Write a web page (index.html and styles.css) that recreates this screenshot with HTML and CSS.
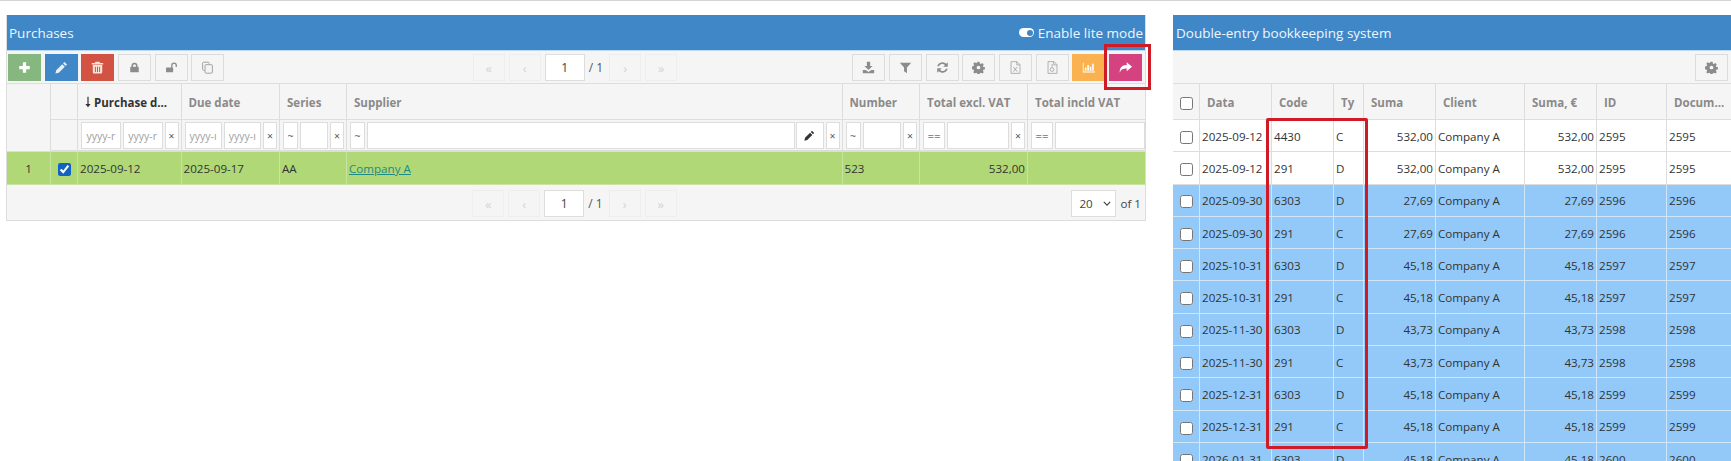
FILE: index.html
```html
<!DOCTYPE html>
<html lang="en">
<head>
<meta charset="utf-8">
<title>Purchases</title>
<link rel="stylesheet" href="styles.css">
</head>
<body>
<svg class="defs" width="0" height="0" aria-hidden="true">
  <symbol id="i-plus" viewBox="0 0 16 16"><path d="M6 1.5h4V6h4.5v4H10v4.5H6V10H1.5V6H6z"/></symbol>
  <symbol id="i-pencil" viewBox="0 0 16 16"><path d="M11.6 1.2l3.2 3.2-1.7 1.7-3.2-3.2zM8.9 3.9l3.2 3.2-7.4 7.4-4.2 1 1-4.2z"/></symbol>
  <symbol id="i-trash" viewBox="0 0 16 16"><path fill-rule="evenodd" d="M5.5 1h5l.8 1.6H15v1.7H1V2.6h3.7zM2.2 5h11.6v8.8c0 1-.8 1.7-1.7 1.7H3.9c-1 0-1.7-.8-1.7-1.7zM4.8 7v6.5h1.2V7zm2.6 0v6.5h1.2V7zM10 7v6.5h1.2V7z"/></symbol>
  <symbol id="i-lock" viewBox="0 0 16 16"><path fill-rule="evenodd" d="M8 1a4.4 4.4 0 0 1 4.4 4.4V7h.8c.6 0 1 .4 1 1v6c0 .6-.4 1-1 1H2.800c-.6 0-1-.4-1-1V8c0-.6.4-1 1-1h.8V5.400A4.400 4.400 0 0 1 8 1zm0 2.200a2.200 2.200 0 0 0-2.200 2.200V7h4.400V5.400A2.200 2.200 0 0 0 8 3.200z"/></symbol>
  <symbol id="i-unlock" viewBox="0 0 16 16"><path d="M1 8h8.500c.5 0 .9.400.9.900v5.200c0 .5-.4.900-.9.900H1c-.5 0-1-.4-1-.9V8.900C0 8.400.5 8 1 8zM7.500 8V5a4.200 4.200 0 0 1 8.400 0v2.400h-1.900V5a2.300 2.300 0 0 0-4.600 0v3z"/></symbol>
  <symbol id="i-copy" viewBox="0 0 16 16"><g fill="none" stroke="currentColor" stroke-width="1.200"><path d="M10 3.500V2.600c0-.6-.5-1.100-1.100-1.100H3.100C2.500 1.500 2 2 2 2.600v7.800c0 .6.500 1.100 1.100 1.100H4.500"/><rect x="5" y="4.500" width="9" height="10.500" rx="1.200"/></g></symbol>
  <symbol id="i-download" viewBox="0 0 16 16"><path d="M6 1h4v5h3l-5 5-5-5h3zM1 11h3.500L8 13.500 11.500 11H15v4H1z"/></symbol>
  <symbol id="i-filter" viewBox="0 0 16 16"><path d="M1 2h14L9.800 8v7L6.200 12.500V8z"/></symbol>
  <symbol id="i-refresh" viewBox="0 0 16 16"><path d="M14.500 1.500V7H9l2-2.100A4.500 4.500 0 0 0 3.700 6.500H1.600A6.600 6.600 0 0 1 12.600 3.400zM1.500 14.500V9H7l-2 2.100a4.500 4.500 0 0 0 7.300-1.600h2.100a6.600 6.600 0 0 1-11 3.100z"/></symbol>
  <symbol id="i-cog" viewBox="0 0 16 16"><path fill-rule="evenodd" d="M6.700 1h2.600l.4 2 1.300.6 1.700-1.100 1.800 1.800-1.100 1.700.6 1.300 2 .4v2.600l-2 .4-.6 1.300 1.100 1.700-1.800 1.800-1.700-1.100-1.300.6-.4 2H6.700l-.4-2-1.300-.6-1.700 1.100-1.800-1.800 1.100-1.700-.6-1.300-2-.4V6.700l2-.4.6-1.300-1.100-1.700 1.800-1.800 1.700 1.100 1.300-.6zM8 5.700a2.300 2.300 0 1 0 0 4.600 2.300 2.300 0 0 0 0-4.600z"/></symbol>
  <symbol id="i-fx" viewBox="0 0 16 16"><path fill="none" stroke="currentColor" d="M2.500.8h7.300l3.700 3.700v10.700h-11zM9.500 1v3.800h3.800"/><path fill="none" stroke="currentColor" stroke-width="1.100" d="M5.500 7.500l4.500 5.500M10 7.500L5.500 13"/></symbol>
  <symbol id="i-fp" viewBox="0 0 16 16"><path fill="none" stroke="currentColor" d="M2.500.8h7.300l3.700 3.700v10.700h-11zM9.500 1v3.800h3.800"/><path fill="none" stroke="currentColor" d="M7.500 3.500v4"/><circle cx="7.500" cy="10.500" r="2.300" fill="none" stroke="currentColor"/></symbol>
  <symbol id="i-chart" viewBox="0 0 16 16"><path d="M1 2h1v11h14v1H1zM3.500 8h2v4h-2zM6.500 5h2v7h-2zM9.500 7h2v5h-2zM12.500 3.500h2V12h-2z"/></symbol>
  <symbol id="i-share" viewBox="0 0 16 16"><path d="M9.500 1.500L16 7l-6.500 5.500V9.200C5 9.200 2.500 10 1 14.500.3 8.500 3.500 5 9.500 4.800z"/></symbol>
  <symbol id="i-sort" viewBox="0 0 8 14"><path d="M3.200 0h1.600v9.500H7.500L4 14 .5 9.500h2.700z"/></symbol>
</svg>

<div class="page">
  <section class="panel panel-main">
    <header class="panel-title">
      <span>Purchases</span>
      <span class="lite"><span class="toggle"></span>Enable lite mode</span>
    </header>
    <div class="toolbar">
      <div class="btns">
        <button class="btn btn-green"><svg class="ic"><use href="#i-plus"/></svg></button>
        <button class="btn btn-blue"><svg class="ic"><use href="#i-pencil"/></svg></button>
        <button class="btn btn-red"><svg class="ic"><use href="#i-trash"/></svg></button>
        <button class="btn"><svg class="ic ic-s"><use href="#i-lock"/></svg></button>
        <button class="btn"><svg class="ic ic-s"><use href="#i-unlock"/></svg></button>
        <button class="btn btn-light"><svg class="ic"><use href="#i-copy"/></svg></button>
      </div>
      <div class="pager">
        <span class="page-btn">«</span><span class="page-btn">‹</span>
        <span class="page-input">1</span><span class="page-total">/ 1</span>
        <span class="page-btn">›</span><span class="page-btn">»</span>
      </div>
      <div class="btns btns-right">
        <button class="btn"><svg class="ic"><use href="#i-download"/></svg></button>
        <button class="btn"><svg class="ic"><use href="#i-filter"/></svg></button>
        <button class="btn"><svg class="ic"><use href="#i-refresh"/></svg></button>
        <button class="btn"><svg class="ic"><use href="#i-cog"/></svg></button>
        <button class="btn btn-light"><svg class="ic"><use href="#i-fx"/></svg></button>
        <button class="btn btn-light"><svg class="ic"><use href="#i-fp"/></svg></button>
        <button class="btn btn-orange"><svg class="ic"><use href="#i-chart"/></svg></button>
        <button class="btn btn-pink"><svg class="ic"><use href="#i-share"/></svg></button>
      </div>
    </div>
    <table class="grid grid-main">
      <colgroup>
        <col class="m1"><col class="m2"><col class="m3"><col class="m4"><col class="m5"><col class="m6"><col class="m7"><col class="m8"><col class="m9">
      </colgroup>
      <thead>
        <tr class="head-row">
          <th rowspan="2"></th><th></th>
          <th class="active"><svg class="sort"><use href="#i-sort"/></svg>Purchase d...</th>
          <th>Due date</th><th>Series</th><th>Supplier</th><th>Number</th><th>Total excl. VAT</th><th>Total incld VAT</th>
        </tr>
        <tr class="filter-row">
          <td></td>
          <td><div class="filter"><span class="fi ph">yyyy-r</span><span class="fi ph">yyyy-r</span><span class="fx">×</span></div></td>
          <td><div class="filter"><span class="fi ph">yyyy-ı</span><span class="fi ph">yyyy-ı</span><span class="fx">×</span></div></td>
          <td><div class="filter"><span class="fo">~</span><span class="fi"></span><span class="fx">×</span></div></td>
          <td><div class="filter"><span class="fo">~</span><span class="fi"></span><span class="fe"><svg class="ic-p"><use href="#i-pencil"/></svg></span><span class="fx">×</span></div></td>
          <td><div class="filter"><span class="fo">~</span><span class="fi"></span><span class="fx">×</span></div></td>
          <td><div class="filter"><span class="fo fo-w">==</span><span class="fi"></span><span class="fx">×</span></div></td>
          <td><div class="filter filter-end"><span class="fo fo-w">==</span><span class="fi"></span></div></td>
        </tr>
      </thead>
      <tbody>
        <tr class="row-green">
          <td class="c">1</td><td class="c"><input type="checkbox" checked></td>
          <td>2025-09-12</td><td>2025-09-17</td><td>AA</td><td><a href="#">Company A</a></td><td>523</td><td class="r">532,00</td><td></td>
        </tr>
      </tbody>
    </table>
    <div class="toolbar footer">
      <div></div>
      <div class="pager">
        <span class="page-btn">«</span><span class="page-btn">‹</span>
        <span class="page-input">1</span><span class="page-total">/ 1</span>
        <span class="page-btn">›</span><span class="page-btn">»</span>
      </div>
      <div class="btns-right size">
        <span class="size-select">20<svg class="chev" viewBox="0 0 10 6"><path d="M1 1l4 4 4-4" fill="none" stroke="currentColor" stroke-width="1.500"/></svg></span>
        <span>of 1</span>
      </div>
    </div>
  </section>

  <section class="panel panel-side">
    <header class="panel-title"><span>Double-entry bookkeeping system</span></header>
    <div class="toolbar toolbar-side">
      <button class="btn"><svg class="ic"><use href="#i-cog"/></svg></button>
    </div>
    <table class="grid grid-side">
      <colgroup>
        <col class="s1"><col class="s2"><col class="s3"><col class="s4"><col class="s5"><col class="s6"><col class="s7"><col class="s8"><col class="s9">
      </colgroup>
      <thead>
        <tr class="head-row">
          <th class="c"><input type="checkbox"></th><th>Data</th><th>Code</th><th>Ty</th><th>Suma</th><th>Client</th><th>Suma, €</th><th>ID</th><th>Docum...</th>
        </tr>
      </thead>
      <tbody>
        <tr><td class="c"><input type="checkbox"></td><td>2025-09-12</td><td>4430</td><td>C</td><td class="r">532,00</td><td>Company A</td><td class="r">532,00</td><td>2595</td><td>2595</td></tr>
        <tr><td class="c"><input type="checkbox"></td><td>2025-09-12</td><td>291</td><td>D</td><td class="r">532,00</td><td>Company A</td><td class="r">532,00</td><td>2595</td><td>2595</td></tr>
        <tr class="row-blue"><td class="c"><input type="checkbox"></td><td>2025-09-30</td><td>6303</td><td>D</td><td class="r">27,69</td><td>Company A</td><td class="r">27,69</td><td>2596</td><td>2596</td></tr>
        <tr class="row-blue"><td class="c"><input type="checkbox"></td><td>2025-09-30</td><td>291</td><td>C</td><td class="r">27,69</td><td>Company A</td><td class="r">27,69</td><td>2596</td><td>2596</td></tr>
        <tr class="row-blue"><td class="c"><input type="checkbox"></td><td>2025-10-31</td><td>6303</td><td>D</td><td class="r">45,18</td><td>Company A</td><td class="r">45,18</td><td>2597</td><td>2597</td></tr>
        <tr class="row-blue"><td class="c"><input type="checkbox"></td><td>2025-10-31</td><td>291</td><td>C</td><td class="r">45,18</td><td>Company A</td><td class="r">45,18</td><td>2597</td><td>2597</td></tr>
        <tr class="row-blue"><td class="c"><input type="checkbox"></td><td>2025-11-30</td><td>6303</td><td>D</td><td class="r">43,73</td><td>Company A</td><td class="r">43,73</td><td>2598</td><td>2598</td></tr>
        <tr class="row-blue"><td class="c"><input type="checkbox"></td><td>2025-11-30</td><td>291</td><td>C</td><td class="r">43,73</td><td>Company A</td><td class="r">43,73</td><td>2598</td><td>2598</td></tr>
        <tr class="row-blue"><td class="c"><input type="checkbox"></td><td>2025-12-31</td><td>6303</td><td>D</td><td class="r">45,18</td><td>Company A</td><td class="r">45,18</td><td>2599</td><td>2599</td></tr>
        <tr class="row-blue"><td class="c"><input type="checkbox"></td><td>2025-12-31</td><td>291</td><td>C</td><td class="r">45,18</td><td>Company A</td><td class="r">45,18</td><td>2599</td><td>2599</td></tr>
        <tr class="row-blue"><td class="c"><input type="checkbox"></td><td>2026-01-31</td><td>6303</td><td>D</td><td class="r">45,18</td><td>Company A</td><td class="r">45,18</td><td>2600</td><td>2600</td></tr>
      </tbody>
    </table>
  </section>
</div>
<div class="mark mark-share"></div>
<div class="mark mark-code"></div>
</body>
</html>
```

FILE: styles.css
```css
* { box-sizing: border-box; }
html, body { margin: 0; height: 461px; overflow: hidden; background: #fff; }
body {
  position: relative;
  border-top: 1px solid #d4d4d4;
  font-family: "Open Sans", "Noto Sans", sans-serif;
  font-size: 11.6px;
  color: #333;
}
.defs { position: absolute; }
.page { display: flex; gap: 27px; padding: 14px 0 0 6px; align-items: flex-start; }

.panel { flex: none; overflow: hidden; }
.panel-main { width: 1140px; border: solid #ddd; border-width: 0 1px 1px; }
.panel-side { width: 558px; }

.panel-title {
  height: 36px;
  display: flex;
  align-items: center;
  justify-content: space-between;
  padding: 0 3px;
  background: #4087c8;
  border-bottom: 1px solid #b9daf2;
  color: #eef6fc;
  font-size: 13.500px;
}
.panel-main .panel-title { margin: 0 -1px; }
.lite { display: flex; align-items: center; gap: 4px; }
.toggle {
  position: relative;
  width: 15px; height: 9px;
  border-radius: 5px;
  background: #fff;
}
.toggle::after {
  content: "";
  position: absolute;
  right: 1px; top: 1.500px;
  width: 6px; height: 6px;
  border-radius: 50%;
  background: #4087c8;
}

.toolbar {
  height: 33px;
  display: grid;
  grid-template-columns: 1fr auto 1fr;
  align-items: center;
  padding: 1px 3px 0 1px;
  background: #f5f5f5;
  border-bottom: 1px solid #ddd;
}
.toolbar-side { display: flex; align-items: center; justify-content: flex-end; padding-right: 3px; }
.footer { height: 35px; border-bottom: 0; padding: 2px 4px 0 1px; }
.btns { display: flex; gap: 3.700px; }
.btns-right { justify-content: flex-end; }

.btn {
  width: 33px; height: 27px;
  padding: 0;
  display: flex; align-items: center; justify-content: center;
  background: #f5f5f5;
  border: 1px solid #dcdcdc;
  color: #8c8c8c;
}
.btn-light { color: #a0a0a0; }
.btn-green { background: #86b77f; border-color: #86b77f; color: #fff; }
.btn-blue { background: #3f87c7; border-color: #3f87c7; color: #e4f1fb; }
.btn-red { background: #d25344; border-color: #d25344; color: #f8e3d8; }
.btn-orange { background: #f9b24f; border-color: #f9b24f; color: #fff; }
.btn-pink { background: #d4437f; border-color: #d4437f; color: #fff; }
.ic { width: 13px; height: 13px; fill: currentColor; }
.ic-s { width: 11px; height: 11px; }

.pager { display: flex; align-items: center; gap: 4px; }
.page-btn {
  width: 32px; height: 27px;
  display: flex; align-items: center; justify-content: center;
  border: 1px solid #eee;
  color: #d4d4d4;
  font-size: 13px;
}
.page-input {
  width: 40px; height: 27px;
  display: flex; align-items: center; justify-content: center;
  background: #fff;
  border: 1px solid #ddd;
  font-size: 12px;
  color: #444;
}
.page-total { width: 16.500px; font-size: 12px; color: #555; }

.grid { width: 100%; table-layout: fixed; border-collapse: separate; border-spacing: 0; }
.grid th, .grid td {
  padding: 1px 2px 0;
  overflow: hidden;
  white-space: nowrap;
  border-right: 1px solid #ddd;
  border-bottom: 1px solid #ddd;
  text-align: left;
  vertical-align: middle;
}
.grid th {
  height: 36px;
  padding-left: 7px;
  background: #f5f5f5;
  color: #8a8a8a;
  font-weight: 700;
  font-size: 11.500px;
}
.grid th:last-child, .grid td:last-child { border-right: 0; }
.grid th.active { color: #333; }
.grid .c { text-align: center; padding: 1px 0 0; }
.grid .r { text-align: right; }
.sort { width: 6px; height: 12px; margin-right: 3px; fill: #333; vertical-align: -1px; }
input[type="checkbox"] { margin: 0; vertical-align: middle; accent-color: #1262c0; }

.grid .filter-row td { height: 32px; background: #f5f5f5; padding: 1px 0 0; border-bottom: 2px solid #ddd; }
.filter { display: flex; gap: 2px; padding: 0 2px 0 3px; height: 27px; font-size: 10.500px; color: #555; }
.filter-end { padding-right: 0; }
.filter span { background: #fff; border: 1px solid #ddd; display: flex; align-items: center; justify-content: center; }
.fi { flex: 1 1 0; min-width: 0; overflow: hidden; }
.filter .ph { color: #a0a0a0; font-size: 10.500px; }
.fo { flex: none; width: 15px; }
.filter .fo-w { width: 22px; color: #333; font-size: 11.500px; }
.fx { flex: none; width: 14px; }
.fe { flex: none; width: 28px; margin-left: -1.500px; }
.ic-p { width: 11px; height: 11px; fill: #333; }

.grid-main .m1 { width: 44px; }
.grid-main .m2 { width: 27px; }
.grid-main .m3 { width: 103.500px; }
.grid-main .m4 { width: 98.500px; }
.grid-main .m5 { width: 67px; }
.grid-main .m6 { width: 495.500px; }
.grid-main .m7 { width: 77.500px; }
.grid-main .m8 { width: 108px; }
.grid-main .m9 { width: auto; }

.grid-main tbody td { height: 33px; }
.row-green td { background: #b0d877; border-color: #c8e49f !important; color: #333; }
.row-green a { color: #1f8a80; }

.footer .size { display: flex; justify-content: flex-end; align-items: center; gap: 4px; font-size: 11.600px; color: #444; }
.size-select {
  width: 45px; height: 27px;
  display: flex; align-items: center; justify-content: space-between;
  padding: 0 4px 0 7px;
  background: #fff;
  border: 1px solid #ddd;
}
.chev { width: 8px; height: 5px; color: #444; }

.grid-side .s1 { width: 27px; }
.grid-side .s2 { width: 72px; }
.grid-side .s3 { width: 62px; }
.grid-side .s4 { width: 30px; }
.grid-side .s5 { width: 72px; }
.grid-side .s6 { width: 89px; }
.grid-side .s7 { width: 72px; }
.grid-side .s8 { width: 70px; }
.grid-side .s9 { width: auto; }
.grid-side tbody td { height: 32.300px; padding: 1px 2px 0; background: #fff; }
.grid-side tbody td.c { padding: 1px 0 0; }
.grid-side .row-blue td { background: #92c9f9; border-color: #cfe5f8; }

.mark { position: absolute; border: 3px solid #cf1b26; }
.mark-share { left: 1104px; top: 43px; width: 47px; height: 46px; }
.mark-code { left: 1266px; top: 117px; width: 102px; height: 331px; border-radius: 2px; }
```
